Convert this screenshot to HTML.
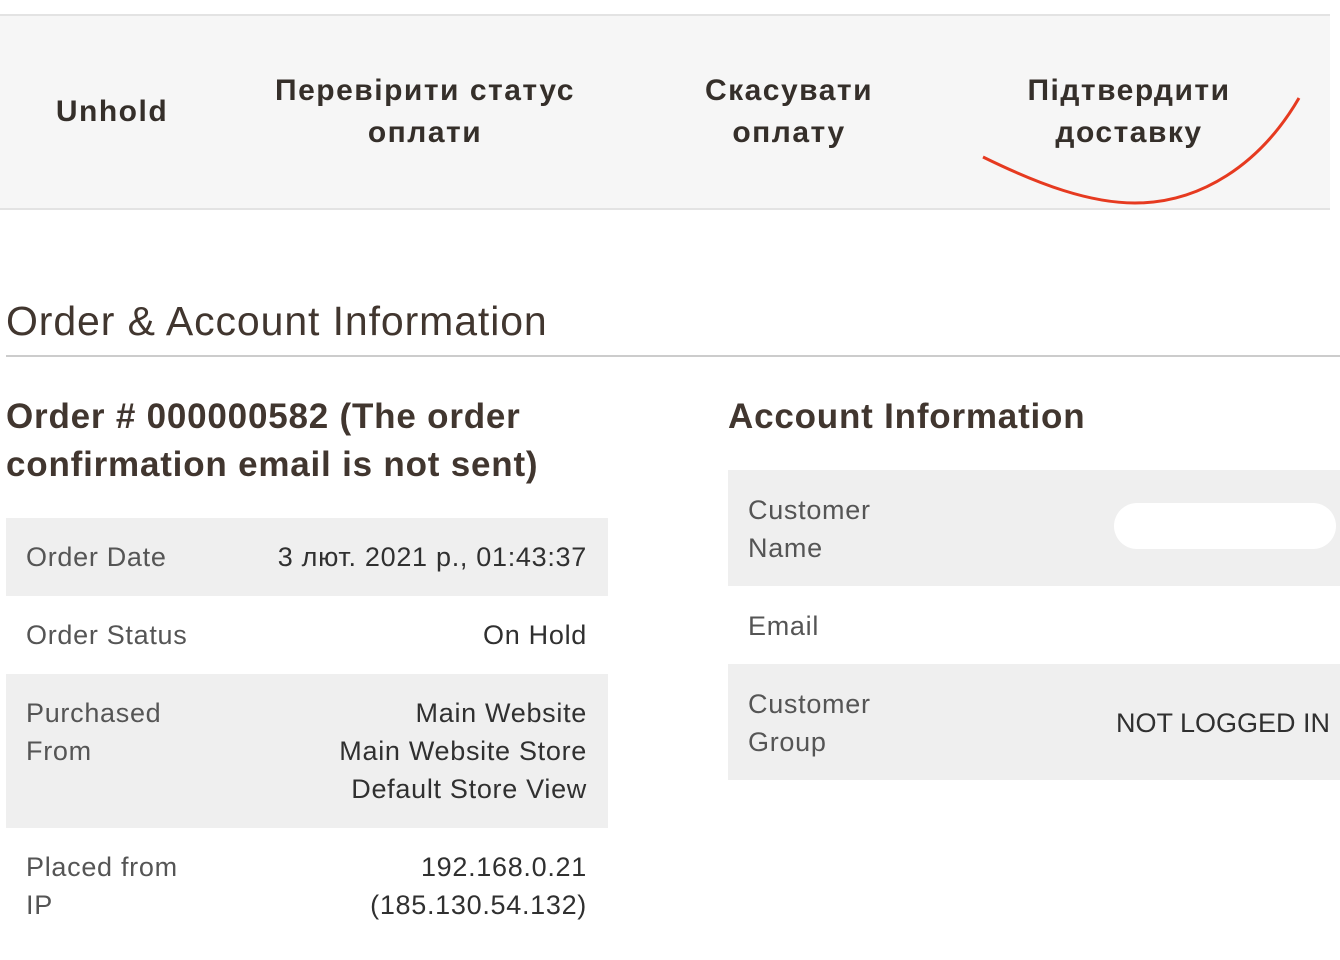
<!DOCTYPE html>
<html><head><meta charset="utf-8"><style>
*{margin:0;padding:0;box-sizing:border-box}
body{width:1340px;height:960px;background:#fff;position:relative;overflow:hidden;font-family:"Liberation Sans","DejaVu Sans",sans-serif;color:#303030}
.a{position:absolute}
.bar{left:0;top:14px;width:1330px;height:196px;background:#f6f6f6;border-top:2px solid #e3e3e3;border-bottom:2px solid #e3e3e3}
.btn{position:absolute;font-weight:bold;font-size:30px;letter-spacing:1.5px;line-height:42px;text-align:center;color:#352f2a;white-space:nowrap}
.row{position:absolute;font-size:27px;letter-spacing:0.7px;line-height:38px}
.row .l{position:absolute;left:20px;color:#555;white-space:nowrap}
.row .v{position:absolute;right:21px;text-align:right;color:#303030;white-space:nowrap}
</style></head><body>
<div class="a bar"></div>
<div class="btn" style="left:12px;width:200px;top:91px">Unhold</div>
<div class="btn" style="left:225px;width:400px;top:70px">Перевірити статус<br>оплати</div>
<div class="btn" style="left:639px;width:300px;top:70px">Скасувати<br>оплату</div>
<div class="btn" style="left:979px;width:300px;top:70px">Підтвердити<br>доставку</div>
<svg class="a" style="left:0;top:0" width="1340" height="240"><path d="M983 157 C1040 185,1090 203,1135 203 C1200 203,1260 165,1299 98" fill="none" stroke="#e63a20" stroke-width="3"/></svg>
<div class="a" style="left:6px;top:298px;font-size:41px;letter-spacing:0.9px;color:#41362f;white-space:nowrap">Order &amp; Account Information</div>
<div class="a" style="left:6px;top:355px;width:1334px;height:2px;background:#ccc"></div>
<div class="a" style="left:6px;top:393px;font-size:35px;letter-spacing:0.8px;font-weight:bold;line-height:48px;color:#41362f;white-space:nowrap">Order # 000000582 (The order<br>confirmation email is not sent)</div>
<div class="row" style="left:6px;top:518px;width:602px;height:78px;background:#efefef"><span class="l" style="top:20px">Order Date</span><span class="v" style="top:20px">3 лют. 2021 р., 01:43:37</span></div>
<div class="row" style="left:6px;top:596px;width:602px;height:78px"><span class="l" style="top:20px">Order Status</span><span class="v" style="top:20px">On Hold</span></div>
<div class="row" style="left:6px;top:674px;width:602px;height:154px;background:#efefef"><span class="l" style="top:20px">Purchased<br>From</span><span class="v" style="top:20px">Main Website<br>Main Website Store<br>Default Store View</span></div>
<div class="row" style="left:6px;top:828px;width:602px;height:112px"><span class="l" style="top:20px">Placed from<br>IP</span><span class="v" style="top:20px">192.168.0.21<br>(185.130.54.132)</span></div>
<div class="a" style="left:728px;top:393px;font-size:35px;letter-spacing:0.8px;font-weight:bold;line-height:48px;color:#41362f">Account Information</div>
<div class="row" style="left:728px;top:470px;width:612px;height:116px;background:#efefef"><span class="l" style="top:21px">Customer<br>Name</span><div class="a" style="left:386px;top:33px;width:222px;height:46px;border-radius:23px;background:#fff"></div></div>
<div class="row" style="left:728px;top:586px;width:612px;height:78px"><span class="l" style="top:21px">Email</span></div>
<div class="row" style="left:728px;top:664px;width:612px;height:116px;background:#efefef"><span class="l" style="top:21px">Customer<br>Group</span><span class="v" style="top:40px;right:10px;letter-spacing:0">NOT LOGGED IN</span></div>
</body></html>
